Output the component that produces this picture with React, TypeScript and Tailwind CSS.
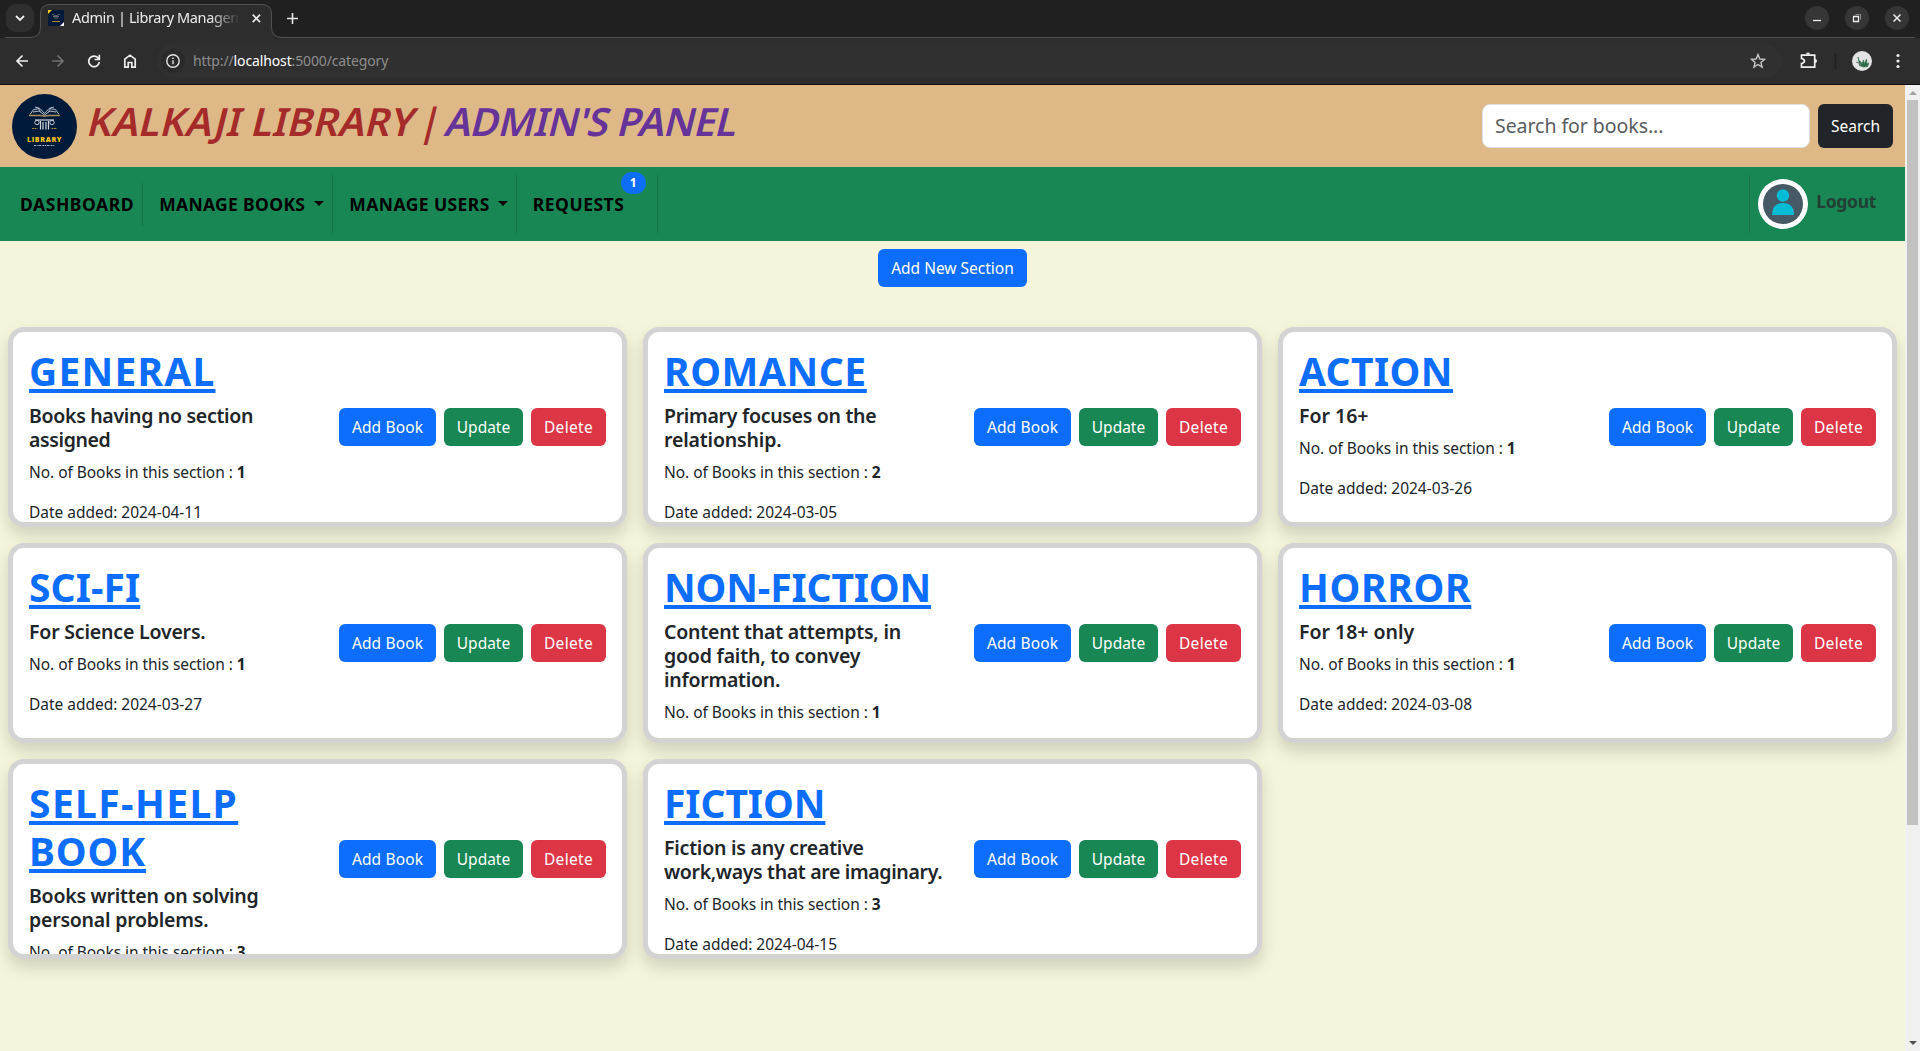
import { useLayoutEffect, useRef } from "react";
import type { ReactNode } from "react";

/* Inline text whose letter spacing is tuned so that it spans `w` pixels. */
function Fit({ w, className = "", children }: { w: number; className?: string; children: ReactNode }) {
  const ref = useRef<HTMLSpanElement>(null);
  useLayoutEffect(() => {
    const el = ref.current;
    if (!el) return;
    el.style.letterSpacing = "0px";
    const count = (el.textContent ?? "").length;
    el.style.letterSpacing = `${(w - el.offsetWidth) / count}px`;
  }, [w]);
  return (
    <span ref={ref} className={`inline-block whitespace-nowrap ${className}`}>
      {children}
    </span>
  );
}

type Line = [string, number];
type Section = { title: Line[]; desc: Line[]; count: number; date: string };

const sections: Section[] = [
  { title: [["GENERAL", 186.5]], desc: [["Books having no section", 224], ["assigned", 81]], count: 1, date: "2024-04-11" },
  { title: [["ROMANCE", 203]], desc: [["Primary focuses on the", 212.5], ["relationship.", 117]], count: 2, date: "2024-03-05" },
  { title: [["ACTION", 153.5]], desc: [["For 16+", 70]], count: 1, date: "2024-03-26" },
  { title: [["SCI-FI", 111.5]], desc: [["For Science Lovers.", 176.5]], count: 1, date: "2024-03-27" },
  {
    title: [["NON-FICTION", 267.5]],
    desc: [["Content that attempts, in", 237], ["good faith, to convey", 196], ["information.", 116]],
    count: 1,
    date: "2024-03-12",
  },
  { title: [["HORROR", 172]], desc: [["For 18+ only", 115]], count: 1, date: "2024-03-08" },
  {
    title: [["SELF-HELP", 209.5], ["BOOK", 117.5]],
    desc: [["Books written on solving", 230], ["personal problems.", 179]],
    count: 3,
    date: "2024-04-02",
  },
  {
    title: [["FICTION", 161.5]],
    desc: [["Fiction is any creative", 200], ["work,ways that are imaginary.", 278]],
    count: 3,
    date: "2024-04-15",
  },
];

function Card({ title, desc, count, date }: Section) {
  return (
    <article className="flex h-[200px] justify-between overflow-hidden rounded-[16px] border-[5px] border-[#d3d3d3] bg-white p-4 shadow-[0_8px_16px_rgba(0,0,0,0.15)]">
      <div className="min-w-0 text-[#212529]">
        <h1 className="mb-2 text-[39px] leading-[46px] font-bold text-[#0d6efd]">
          {title.map(([t, w]) => (
            <a key={t} className="block h-12">
              <Fit w={w} className="underline decoration-[4px] underline-offset-[3px]">{t}</Fit>
            </a>
          ))}
        </h1>
        <h5 className="mb-2 text-[19.5px] leading-6 font-[580]">
          {desc.map(([t, w]) => (
            <div key={t} className="h-6">
              <Fit w={w}>{t}</Fit>
            </div>
          ))}
        </h5>
        <p className="mb-4 h-6 text-[15.5px] leading-6">
          <Fit w={216.5}>
            No. of Books in this section : <b>{count}</b>
          </Fit>
        </p>
        <p className="h-6 text-[15.5px] leading-6">
          <Fit w={173.5}>Date added: {date}</Fit>
        </p>
      </div>
      <div className="mt-[60px] flex h-[38px] shrink-0 gap-2 text-[15.5px] leading-[36px] text-white">
        <button className="w-[97px] rounded-md bg-[#0d6efd]"><Fit w={71}>Add Book</Fit></button>
        <button className="w-[79px] rounded-md bg-[#198754]"><Fit w={53}>Update</Fit></button>
        <button className="w-[75px] rounded-md bg-[#dc3545]"><Fit w={49}>Delete</Fit></button>
      </div>
    </article>
  );
}

function Logo({ className }: { className: string }) {
  return (
    <svg viewBox="0 0 65 65" className={className} fill="none">
      <circle cx="32.5" cy="32.5" r="32.5" fill="#001b39" />
      <g stroke="#cfd4da" strokeWidth="0.9">
        <path d="M18 20.500l3.500-5 4-.5M47 20.500l-3.500-5-4-.5M23 13l5 1.500 4.500 5 4.500-5 5-1.500M21 18l6-1 5.500 4 5.500-4 6 1M25.500 13.500l3 4M39.500 13.500l-3 4" />
        <path d="M17 21.500h11q4.500 0 4.500 1.500q0-1.500 4.500-1.500h11" stroke="#a98d5c" strokeWidth="1.400" />
        <path d="M23 26h19" strokeWidth="1.200" />
        <path d="M28.500 27v8.500M31 28v7.500M34 28v7.500M36.500 27v8.500" strokeWidth="1.200" />
        <circle cx="25" cy="28.500" r="2.200" />
        <circle cx="40" cy="28.500" r="2.200" />
        <path d="M20 34.500h5.500M39.500 34.500H45" stroke="#a98a3c" strokeWidth="1" strokeDasharray="2 .6" />
      </g>
      <text x="15" y="48" textLength="34.500" fontSize="7" fontWeight="800" fill="#fcc719" fontFamily="Open Sans, sans-serif">LIBRARY</text>
      <path d="M22 51.500h21" stroke="#aab2bd" strokeWidth="1.200" strokeDasharray="2 .7 1 .6 3 1" />
    </svg>
  );
}

function BrowserChrome() {
  return (
    <div className="h-[85px] border-b border-[#111114] bg-[#2d2d2d] text-[#e8e8e8]">
      <div className="relative flex h-[38px] items-start bg-[#202020]">
        <svg className="absolute inset-0" width="1920" height="38" fill="none">
          <path d="M0.500 46V44Q0.500 37.500 8 37.500H30Q40.500 37.500 40.500 27V14Q40.500 4.500 50 4.500H262Q271.500 4.500 271.500 14V27Q271.500 37.500 282 37.500H1912Q1919.500 37.500 1919.500 44V46Z" fill="#2d2d2d" stroke="#515151" />
        </svg>
        <div className="relative ml-[6px] mt-1 flex size-7 items-center justify-center rounded-[10px] bg-[#2f2f2f]">
          <svg width="10" height="7" viewBox="0 0 10 7" fill="none" stroke="#eee" strokeWidth="1.800"><path d="M1 1l4 4 4-4" /></svg>
        </div>
        <svg className="relative ml-[14px] mt-[10px]" width="16" height="16" fill="none">
          <path d="M0 0h16v16H0z" fill="#021a3a" />
          <path d="M0 0h4L0 4z" fill="#ffca1c" />
          <path d="M16 12v4h-4z" fill="#fff" />
          <path d="M4 4.500l4 1 4-1M5 6.500h6M6 8h4" stroke="#62666e" />
          <path d="M4 11.500h8" stroke="#a58a2a" />
        </svg>
        <div className="relative ml-2 mt-[4px] h-7 w-[168px] overflow-hidden text-[14.500px] leading-[27px] text-[#ededed] [mask-image:linear-gradient(to_right,black_82%,transparent)]">
          <Fit w={193}>Admin | Library Management</Fit>
        </div>
        <svg className="relative ml-[12px] mt-[14px]" width="9" height="9" stroke="#e8e8e8" strokeWidth="1.700"><path d="M.7.7l7.400 7.400M8.100.7L.7 8.100" /></svg>
        <svg className="relative ml-[26px] mt-[13px]" width="11" height="11" stroke="#e8e8e8" strokeWidth="1.600"><path d="M5.500 0v11M0 5.500h11" /></svg>
        <div className="relative mt-[6px] mr-[11px] ml-auto flex gap-4">
          <svg width="24" height="24" fill="none" stroke="#eee" strokeWidth="1.300">
            <circle cx="12" cy="12" r="12" fill="#363636" stroke="none" />
            <path d="M8 14.500h8" />
          </svg>
          <svg width="24" height="24" fill="none" stroke="#eee" strokeWidth="1.300">
            <circle cx="12" cy="12" r="12" fill="#363636" stroke="none" />
            <path d="M8.500 10.500h5v5h-5z" />
            <path d="M10.500 8.500h5v5" stroke="#8a8a8a" strokeWidth="1" />
          </svg>
          <svg width="24" height="24" fill="none" stroke="#eee" strokeWidth="1.500">
            <circle cx="12" cy="12" r="12" fill="#363636" stroke="none" />
            <path d="M8.500 8.500l7 7M15.500 8.500l-7 7" />
          </svg>
        </div>
      </div>
      <div className="flex h-[46px] items-center">
        <svg className="shrink-0" width="157" height="46" fill="none" stroke="#eee" strokeWidth="1.700">
          <path d="M28 23H17M22.500 17.500L17 23l5.500 5.500" />
          <path d="M52 23h11M57.500 17.500L63 23l-5.500 5.500" stroke="#717171" />
          <path d="M98.500 20.500a5.300 5.300 0 1 0 .8 3.500M99.300 16.800v4.700h-4.700" />
          <path d="M124.800 21.200v8h3.400v-4.700h3.600v4.700h3.400v-8L130 17.200z" />
        </svg>
        <div className="flex h-[34px] w-[1625px] items-center rounded-full bg-[#303030] pl-1">
          <div className="flex size-6 items-center justify-center rounded-full bg-[#2a2a2a]">
            <svg width="14" height="14" fill="none" stroke="#e5e5e5" strokeWidth="1.400"><circle cx="7" cy="7" r="6.200" /><path d="M7 6.200v4M7 3.500v1.500" /></svg>
          </div>
          <div className="ml-2 text-[14px] leading-5 text-[#8d8d8d]">
            <Fit w={195}>http://<span className="text-white">localhost</span>:5000/category</Fit>
          </div>
          <svg className="mr-[16px] ml-auto" width="16" height="16" fill="none" stroke="#c4c4c4" strokeWidth="1.400"><path d="M8 1.500l1.800 4.500 4.800.3-3.700 3.100 1.200 4.700L8 11.500l-4.100 2.600 1.200-4.700-3.700-3.100 4.800-.3z" /></svg>
        </div>
        <svg className="shrink-0" width="138" height="46" fill="none">
          <path d="M19.500 17.200h13.200v12H19.500v-3.700q3-.7 3-2.500t-3-2.500z" stroke="#eee" strokeWidth="1.700" />
          <path d="M24 16.500a2 2 0 0 1 4 0zM33 21a2 2 0 0 1 0 4z" fill="#eee" />
          <path d="M53.500 15v16" stroke="#222" strokeWidth="1.500" />
          <circle cx="80" cy="23" r="10" fill="#e3e3e3" />
          <path d="M76 19q.5 4 2.500 4.500l1.500 2.500 1.500-4 1 4 2-5 .5 5 2-1-1.500 3.500-4 .5-4-1.500z" fill="#2a6b4a" stroke="#2a6b4a" strokeWidth=".6" />
          <path d="M74 24l4 1.500 1 2" stroke="#777" />
          <circle cx="116" cy="17.500" r="1.600" fill="#eee" /><circle cx="116" cy="23" r="1.600" fill="#eee" /><circle cx="116" cy="28.500" r="1.600" fill="#eee" />
        </svg>
      </div>
    </div>
  );
}

const Rule = ({ className }: { className: string }) => <div className={`w-px shrink-0 bg-black/15 ${className}`} />;
const Caret = () => <div className="mt-[-2px] border-x-[5px] border-t-[5px] border-x-transparent border-t-black" />;

export default function App() {
  return (
    <div className="flex h-[1051px] w-[1920px] flex-col overflow-hidden bg-[#f5f5dc] font-['Noto_Sans',sans-serif]">
      <BrowserChrome />
      <div className="flex min-h-0 flex-1">
        <div className="w-[1905px] shrink-0">
          <header className="flex h-[82px] items-start bg-[#deb887] pt-[9px] pl-3">
            <Logo className="size-[65px]" />
            <h1 className="ml-3 mt-[3px] flex text-[39px] leading-[48px] font-[580]">
              <Fit w={327} className="-skew-x-[14deg] text-[#a52a2a]">KALKAJI LIBRARY</Fit>
              <span className="w-[31px] -skew-x-[14deg] text-center text-[#a52a2a]">|</span>
              <Fit w={291} className="-skew-x-[14deg] text-[#663399]">ADMIN'S PANEL</Fit>
            </h1>
            <div className="mt-[10px] mr-3 ml-auto flex h-11 gap-2">
              <div className="w-[328px] rounded-lg border border-[#dee2e6] bg-white pl-3 text-[19.500px] leading-[41px] text-[#595c5f]">
                <Fit w={168}>Search for books...</Fit>
              </div>
              <button className="w-[75px] rounded-md bg-[#212529] text-[15.500px] leading-[42px] text-white"><Fit w={49}>Search</Fit></button>
            </div>
          </header>
          <nav className="flex h-[74px] items-center bg-[#198754] pl-5 text-[17.500px] leading-7 font-bold text-black">
            <Fit w={114}>DASHBOARD</Fit>
            <Rule className="ml-[8px] h-[43px]" />
            <Fit w={146} className="ml-4">MANAGE BOOKS</Fit>
            <div className="ml-[9px]"><Caret /></div>
            <Rule className="ml-[8px] h-[58px]" />
            <Fit w={140} className="ml-4">MANAGE USERS</Fit>
            <div className="ml-[8px]"><Caret /></div>
            <Rule className="ml-[8px] h-[58px]" />
            <div className="relative ml-4">
              <Fit w={92}>REQUESTS</Fit>
              <span className="absolute -top-[18px] left-[88px] flex h-[22px] w-[25px] items-center justify-center rounded-full bg-[#0d6efd] text-[12px] leading-none text-white">1</span>
            </div>
            <Rule className="ml-[33px] h-[58px]" />
            <Rule className="ml-auto h-[58px]" />
            <svg className="ml-2" width="50" height="50">
              <circle cx="25" cy="25" r="25" fill="#fff" />
              <circle cx="25" cy="25" r="20" fill="#455a64" />
              <circle cx="25" cy="16.500" r="6.200" fill="#00bcd4" />
              <path d="M14 36q0-12 11-12t11 12z" fill="#00bcd4" />
            </svg>
            <div className="mt-[-7px] mr-[29px] ml-2 text-[#213f33]"><Fit w={60}>Logout</Fit></div>
          </nav>
          <main>
            <div className="flex justify-center pt-2 pb-10">
              <button className="h-[38px] w-[149px] rounded-md bg-[#0d6efd] text-[15.500px] leading-[36px] text-white"><Fit w={123}>Add New Section</Fit></button>
            </div>
            <div className="grid grid-cols-3 gap-4 px-2">
              {sections.map((s) => <Card key={s.title[0][0]} {...s} />)}
            </div>
          </main>
        </div>
        <div className="flex w-[15px] flex-col items-center bg-[#f0f0f0]">
          <div className="mt-[6px] mb-[5px] border-x-4 border-b-4 border-x-transparent border-b-[#a3a3a3]" />
          <div className="h-[725px] w-[11px] bg-[#c1c1c1]" />
          <div className="mt-auto mb-[6px] border-x-4 border-t-4 border-x-transparent border-t-[#505050]" />
        </div>
      </div>
    </div>
  );
}
